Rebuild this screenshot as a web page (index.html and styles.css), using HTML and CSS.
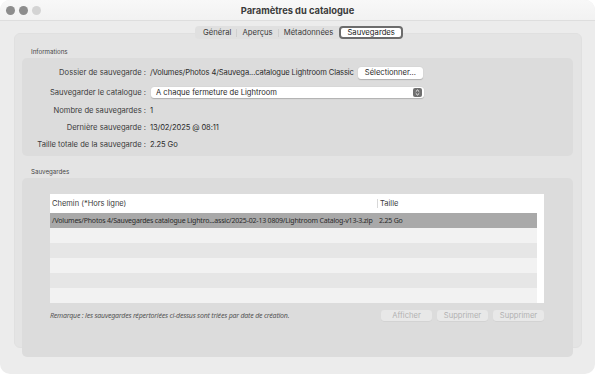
FILE: index.html
```html
<!DOCTYPE html>
<html lang="fr">
<head>
    <meta charset="UTF-8">
    <title>Paramètres du catalogue</title>
    <link rel="stylesheet" href="styles.css">
</head>
<body>
    <div class="window">
        <div class="titlebar">
            <div class="lights">
                <span class="light"></span>
                <span class="light"></span>
                <span class="light off"></span>
            </div>
            <div class="title">Paramètres du catalogue</div>
            <div></div>
        </div>

        <div class="content">
            <div class="tabs">
                <span class="tab">Général</span>
                <span class="sep"></span>
                <span class="tab">Aperçus</span>
                <span class="sep"></span>
                <span class="tab">Métadonnées</span>
                <span class="tab active">Sauvegardes</span>
            </div>

            <div class="panel">
                <div class="group-label">Informations</div>
                <div class="group info">
                    <div class="row">
                        <span class="key">Dossier de sauvegarde :</span>
                        <span class="val">/Volumes/Photos 4/Sauvega...catalogue Lightroom Classic</span>
                        <span class="btn">Sélectionner...</span>
                    </div>
                    <div class="row gap-top">
                        <span class="key">Sauvegarder le catalogue :</span>
                        <div class="select">
                            <span>A chaque fermeture de Lightroom</span>
                            <svg class="stepper" width="9" height="9" viewBox="0 0 9 9">
                                <rect width="9" height="9" rx="2" fill="#6f6f6f"/>
                                <path d="M2.8 3.6 L4.5 2 L6.2 3.6 M2.8 5.4 L4.5 7 L6.2 5.4" stroke="#fff" stroke-width="0.9" fill="none"/>
                            </svg>
                        </div>
                    </div>
                    <div class="row small-top">
                        <span class="key">Nombre de sauvegardes :</span>
                        <span class="val">1</span>
                    </div>
                    <div class="row">
                        <span class="key">Dernière sauvegarde :</span>
                        <span class="val">13/02/2025 @ 08:11</span>
                    </div>
                    <div class="row">
                        <span class="key">Taille totale de la sauvegarde :</span>
                        <span class="val">2.25 Go</span>
                    </div>
                </div>

                <div class="group-label second">Sauvegardes</div>
                <div class="group backups">
                    <div class="table">
                        <div class="thead">
                            <span class="col-path">Chemin (*Hors ligne)</span>
                            <span class="col-size">Taille</span>
                        </div>
                        <div class="trow selected">
                            <span class="col-path">/Volumes/Photos 4/Sauvegardes catalogue Lightro...assic/2025-02-13 0809/Lightroom Catalog-v13-3.zip</span>
                            <span class="col-size">2.25 Go</span>
                        </div>
                        <div class="trow"></div>
                        <div class="trow odd"></div>
                        <div class="trow"></div>
                        <div class="trow odd"></div>
                        <div class="trow"></div>
                    </div>
                    <div class="footer">
                        <span class="note">Remarque : les sauvegardes répertoriées ci-dessus sont triées par date de création.</span>
                        <div class="actions">
                            <span class="btn disabled">Afficher</span>
                            <span class="btn disabled">Supprimer</span>
                            <span class="btn disabled">Supprimer</span>
                        </div>
                    </div>
                </div>
            </div>
        </div>
    </div>
</body>
</html>
```
FILE: styles.css
```css
body {
    margin: 0;
    background-color: #fff;
    font-family: Inter, "Liberation Sans", sans-serif;
    color: #2b2b2b;
}
.window {
    width: 595px;
    height: 374px;
    background-color: #ececec;
    border-radius: 10px;
    overflow: hidden;
}
.titlebar {
    height: 20px;
    display: grid;
    grid-template-columns: 1fr auto 1fr;
    align-items: center;
    background: linear-gradient(#f8f8f8, #f2f2f2);
    border-bottom: 1px solid #dedede;
}
.lights {
    display: flex;
    gap: 4px;
    padding-left: 6px;
}
.light {
    width: 9px;
    height: 9px;
    border-radius: 50%;
    background-color: #8d8d8d;
}
.light.off {
    background-color: #d4d4d4;
}
.title {
    font-size: 9.3px;
    font-weight: 700;
    color: #3a3a3a;
}
.content {
    padding: 5px 13px 0 14px;
}
.tabs {
    display: flex;
    align-items: center;
    width: fit-content;
    margin: 0 auto -6px;
    position: relative;
    left: 1px;
    padding-left: 3px;
    height: 13px;
    background-color: #e0e0e0;
    border-radius: 4px;
    font-size: 7.7px;
    color: #3a3a3a;
}
.tab {
    padding: 0 5px;
}
.sep {
    width: 1px;
    height: 8px;
    background-color: #cfcfcf;
}
.tab.active {
    margin-left: 1px;
    padding: 0 6px;
    line-height: 9px;
    background-color: #fff;
    border: 2px solid #6c6c6c;
    border-radius: 4px;
    color: #222;
}
.panel {
    height: 315px;
    padding: 13px 8px 0 7px;
    background-color: #e4e4e4;
    border: 1px solid #e0e0e0;
    border-radius: 6px;
    box-sizing: border-box;
}
.group-label {
    font-size: 6.2px;
    color: #444;
    height: 10px;
    line-height: 10px;
    padding-left: 9px;
    margin-bottom: 1px;
}
.group-label.second {
    margin-top: 11px;
}
.group {
    background-color: #dcdcdc;
    border-radius: 5px;
    box-sizing: border-box;
}
.info {
    height: 98px;
    padding-top: 6px;
}
.row {
    display: flex;
    align-items: center;
    height: 17px;
    font-size: 7.6px;
}
.row.gap-top {
    margin-top: 3px;
}
.row.small-top {
    margin-top: 1px;
}
.key {
    width: 124px;
    text-align: right;
    color: #3c3c3c;
    flex-shrink: 0;
}
.val {
    margin-left: 4px;
    white-space: nowrap;
    letter-spacing: -0.12px;
}
.btn {
    display: inline-block;
    height: 12px;
    line-height: 12px;
    padding: 0 7px;
    margin-left: 4px;
    font-size: 7.6px;
    background-color: #fff;
    border-radius: 3px;
    box-shadow: 0 0.5px 1px rgba(0,0,0,0.2);
    white-space: nowrap;
}
.select {
    display: flex;
    align-items: center;
    justify-content: space-between;
    width: 273px;
    height: 11px;
    margin-left: 5px;
    padding: 0 2px 0 5px;
    box-sizing: border-box;
    background-color: #fff;
    border-radius: 3px;
    box-shadow: 0 0.5px 1px rgba(0,0,0,0.2);
}
.backups {
    height: 179px;
    padding: 16px 29px 0 28px;
}
.table {
    background-color: #fff;
    height: 109px;
    font-family: "Noto Sans", "Liberation Sans", sans-serif;
    font-size: 7px;
    letter-spacing: -0.2px;
    color: #2a2a2a;
}
.thead {
    display: flex;
    align-items: center;
    height: 19px;
    font-family: Inter, "Liberation Sans", sans-serif;
    font-size: 7.5px;
    letter-spacing: 0;
    color: #3a3a3a;
}
.thead .col-size {
    border-left: 1px solid #d8d8d8;
    line-height: 9px;
}
.trow {
    display: flex;
    align-items: center;
    height: 15px;
    width: 487px;
    background-color: #f2f2f2;
}
.trow.odd {
    background-color: #e6e6e6;
}
.trow.selected {
    background-color: #a9a9a9;
}
.col-path {
    width: 325px;
    padding-left: 2px;
    white-space: nowrap;
    overflow: hidden;
}
.col-size {
    padding-left: 2px;
}
.footer {
    display: flex;
    align-items: center;
    justify-content: space-between;
    margin-top: 7px;
}
.note {
    font-family: "Noto Sans", "Liberation Sans", sans-serif;
    font-style: italic;
    font-size: 7px;
    letter-spacing: -0.2px;
    color: #555;
}
.actions {
    display: flex;
    gap: 5px;
}
.btn.disabled {
    width: 51px;
    height: 11px;
    line-height: 11px;
    padding: 0;
    margin: 0;
    text-align: center;
    background-color: #e8e8e8;
    color: #b2b2b2;
    box-shadow: 0 0.5px 0.5px rgba(0,0,0,0.08);
}
```
